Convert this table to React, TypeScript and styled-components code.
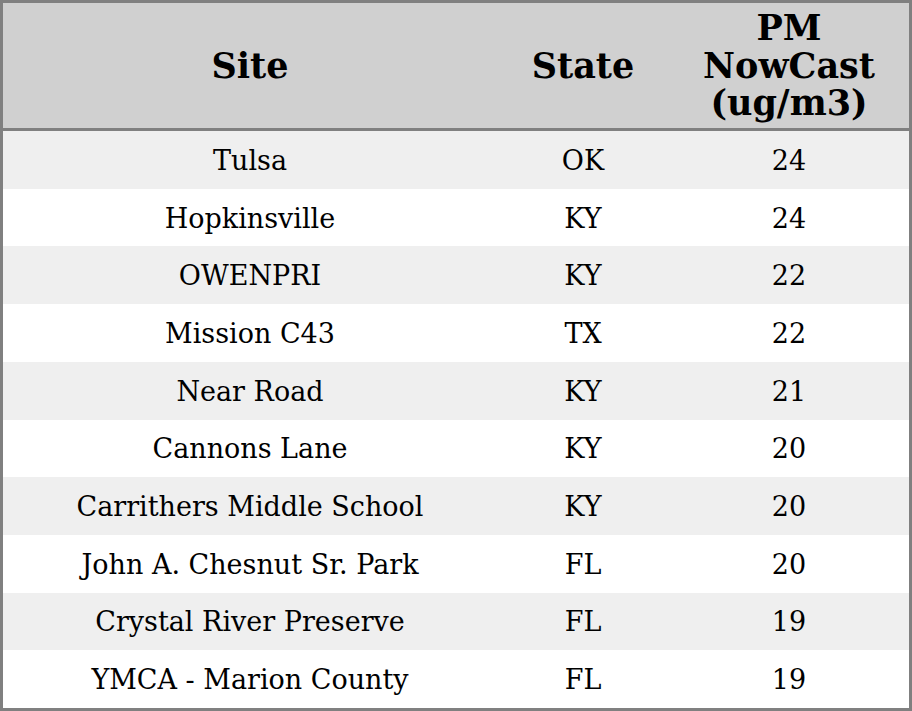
import React from 'react';
import styled, { createGlobalStyle } from 'styled-components';

const GlobalStyle = createGlobalStyle`
  html, body {
    margin: 0;
    padding: 0;
    background: #ffffff;
  }
`;

interface Reading {
  site: string;
  state: string;
  value: number;
}

const readings: Reading[] = [
  { site: 'Tulsa', state: 'OK', value: 24 },
  { site: 'Hopkinsville', state: 'KY', value: 24 },
  { site: 'OWENPRI', state: 'KY', value: 22 },
  { site: 'Mission C43', state: 'TX', value: 22 },
  { site: 'Near Road', state: 'KY', value: 21 },
  { site: 'Cannons Lane', state: 'KY', value: 20 },
  { site: 'Carrithers Middle School', state: 'KY', value: 20 },
  { site: 'John A. Chesnut Sr. Park', state: 'FL', value: 20 },
  { site: 'Crystal River Preserve', state: 'FL', value: 19 },
  { site: 'YMCA - Marion County', state: 'FL', value: 19 },
];

const Frame = styled.div`
  width: 912px;
  height: 711px;
  box-sizing: border-box;
  border: 3px solid #808080;
  display: grid;
  grid-template-rows: 125px 3px repeat(10, 1fr);
  font-family: 'DejaVu Serif', serif;
  color: #000;
`;

const Row = styled.div<{ $striped?: boolean; $header?: boolean }>`
  display: grid;
  grid-template-columns: 494px 172px 1fr;
  align-items: center;
  box-sizing: border-box;
  padding-top: ${p => (p.$header ? '0' : '2px')};
  background: ${p => (p.$header ? '#d0d0d0' : p.$striped ? '#efefef' : '#ffffff')};
  font-size: ${p => (p.$header ? '35px' : '27px')};
  font-weight: ${p => (p.$header ? 'bold' : 'normal')};
  line-height: ${p => (p.$header ? '37.5px' : '30px')};
`;

const Cell = styled.div`
  text-align: center;
`;

const Rule = styled.div`
  background: #808080;
`;

export default function App() {
  return (
    <>
      <GlobalStyle />
      <Frame>
        <Row $header>
          <Cell>Site</Cell>
          <Cell>State</Cell>
          <Cell>PM<br />NowCast<br />(ug/m3)</Cell>
        </Row>
        <Rule />
        {readings.map((r, i) => (
          <Row key={r.site} $striped={i % 2 === 0}>
            <Cell>{r.site}</Cell>
            <Cell>{r.state}</Cell>
            <Cell>{r.value}</Cell>
          </Row>
        ))}
      </Frame>
    </>
  );
}
